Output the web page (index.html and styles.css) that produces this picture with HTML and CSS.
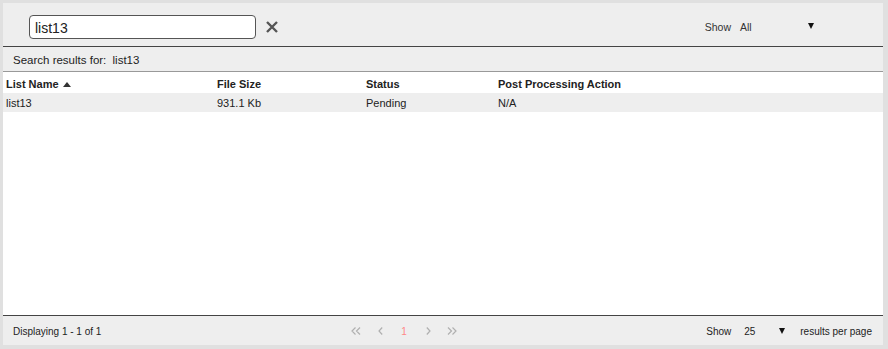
FILE: index.html
```html
<!DOCTYPE html>
<html lang="en">
<head>
    <meta charset="UTF-8">
    <meta name="viewport" content="width=device-width, initial-scale=1.0">
    <title>Lists</title>
    <link rel="stylesheet" href="styles.css">
</head>
<body>
    <div class="panel">
        <div class="toolbar">
            <div class="search-box">
                <input type="text" class="search-input" value="list13">
                <span class="clear-btn">
                    <svg width="12" height="12" viewBox="0 0 12 12">
                        <path d="M1 1 L11 11 M11 1 L1 11" stroke="#555" stroke-width="2.4" fill="none"/>
                    </svg>
                </span>
            </div>
            <div class="show-filter">
                <span class="show-label">Show</span>
                <span class="select">All<span class="caret"></span></span>
            </div>
        </div>

        <div class="search-info">
            Search results for: <span class="term">list13</span>
        </div>

        <div class="table">
            <div class="row head">
                <div class="col c1">List Name <span class="sort-up"></span></div>
                <div class="col c2">File Size</div>
                <div class="col c3">Status</div>
                <div class="col c4">Post Processing Action</div>
            </div>
            <div class="row item">
                <div class="col c1">list13</div>
                <div class="col c2">931.1 Kb</div>
                <div class="col c3">Pending</div>
                <div class="col c4">N/A</div>
            </div>
        </div>

        <div class="footer">
            <div class="displaying">Displaying 1 - 1 of 1</div>
            <div class="pager">
                <span class="pg">
                    <svg width="10" height="8" viewBox="0 0 10 8"><path d="M4.5 0.5 L1 4 L4.5 7.5 M9 0.5 L5.5 4 L9 7.5" stroke="#b0b0b0" stroke-width="1.2" fill="none"/></svg>
                </span>
                <span class="pg">
                    <svg width="5" height="8" viewBox="0 0 5 8"><path d="M4.2 0.5 L1 4 L4.2 7.5" stroke="#b0b0b0" stroke-width="1.2" fill="none"/></svg>
                </span>
                <span class="pg current">1</span>
                <span class="pg">
                    <svg width="5" height="8" viewBox="0 0 5 8"><path d="M0.8 0.5 L4 4 L0.8 7.5" stroke="#b0b0b0" stroke-width="1.2" fill="none"/></svg>
                </span>
                <span class="pg">
                    <svg width="10" height="8" viewBox="0 0 10 8"><path d="M1 0.5 L4.5 4 L1 7.5 M5.5 0.5 L9 4 L5.5 7.5" stroke="#b0b0b0" stroke-width="1.2" fill="none"/></svg>
                </span>
            </div>
            <div class="per-page">
                <span class="show-label">Show</span>
                <span class="select small">25<span class="caret"></span></span>
                <span class="per-text">results per page</span>
            </div>
        </div>
    </div>
</body>
</html>
```

FILE: styles.css
```css
body {
    margin: 0;
    background: #e0e0e0;
    font-family: "Liberation Sans", Arial, sans-serif;
    font-size: 11px;
    color: #222;
}

.panel {
    margin: 3px 5px 3px 3px;
    height: 342px;
    background: #eeeeee;
    display: flex;
    flex-direction: column;
}

.toolbar {
    display: flex;
    justify-content: space-between;
    align-items: center;
    height: 44px;
    padding: 5px 0 0 26px;
    box-sizing: border-box;
    border-bottom: 1px solid #444;
}

.search-box {
    display: flex;
    align-items: center;
}

.search-input {
    width: 227px;
    height: 24px;
    box-sizing: border-box;
    border: 1px solid #555;
    border-radius: 4px;
    padding: 1px 5px 0;
    font-family: "Liberation Sans", Arial, sans-serif;
    font-size: 14px;
    color: #222;
    background: #fff;
    outline: none;
}

.clear-btn {
    display: flex;
    margin-left: 10px;
}

.show-filter {
    display: flex;
    align-items: center;
    margin-right: 65px;
    font-size: 10.5px;
    color: #333;
}

.show-label {
    margin-right: 9px;
}

.select {
    display: flex;
    align-items: center;
    width: 78px;
    position: relative;
}

.caret {
    position: absolute;
    right: 4px;
    top: 2px;
    border-left: 3px solid transparent;
    border-right: 3px solid transparent;
    border-top: 6px solid #111;
}

.select.small {
    width: 42px;
}

.select.small .caret {
    right: 1px;
}

.search-info {
    height: 24px;
    line-height: 26px;
    padding-left: 10px;
    font-size: 11.5px;
    border-bottom: 1px solid #999;
}

.search-info .term {
    margin-left: 3px;
}

.table {
    flex: 1;
    background: #fff;
    border-bottom: 1px solid #444;
}

.row {
    display: flex;
}

.row.head {
    height: 21px;
    line-height: 25px;
    font-weight: bold;
    background: #fff;
}

.row.item {
    height: 19px;
    line-height: 21px;
    background: #eeeeee;
}

.col {
    padding-left: 3px;
    box-sizing: border-box;
}

.c1 { width: 211px; }
.c2 { width: 149px; }
.c3 { width: 132px; }
.c4 { flex: 1; }

.sort-up {
    display: inline-block;
    vertical-align: 1px;
    margin-left: 1px;
    border-left: 4px solid transparent;
    border-right: 4px solid transparent;
    border-bottom: 5px solid #333;
}

.footer {
    height: 29px;
    display: flex;
    align-items: center;
    padding-left: 10px;
    padding-top: 1px;
    font-size: 10px;
    box-sizing: border-box;
}

.displaying {
    width: 331px;
}

.pager {
    display: flex;
    align-items: center;
}

.pg {
    width: 24px;
    display: flex;
    justify-content: center;
}

.pg.current {
    color: #f88;
}

.per-page {
    margin-left: auto;
    margin-right: 11px;
    display: flex;
    align-items: center;
    color: #222;
}

.per-page .show-label {
    margin-right: 13px;
}

.per-text {
    margin-left: 14px;
}
```
